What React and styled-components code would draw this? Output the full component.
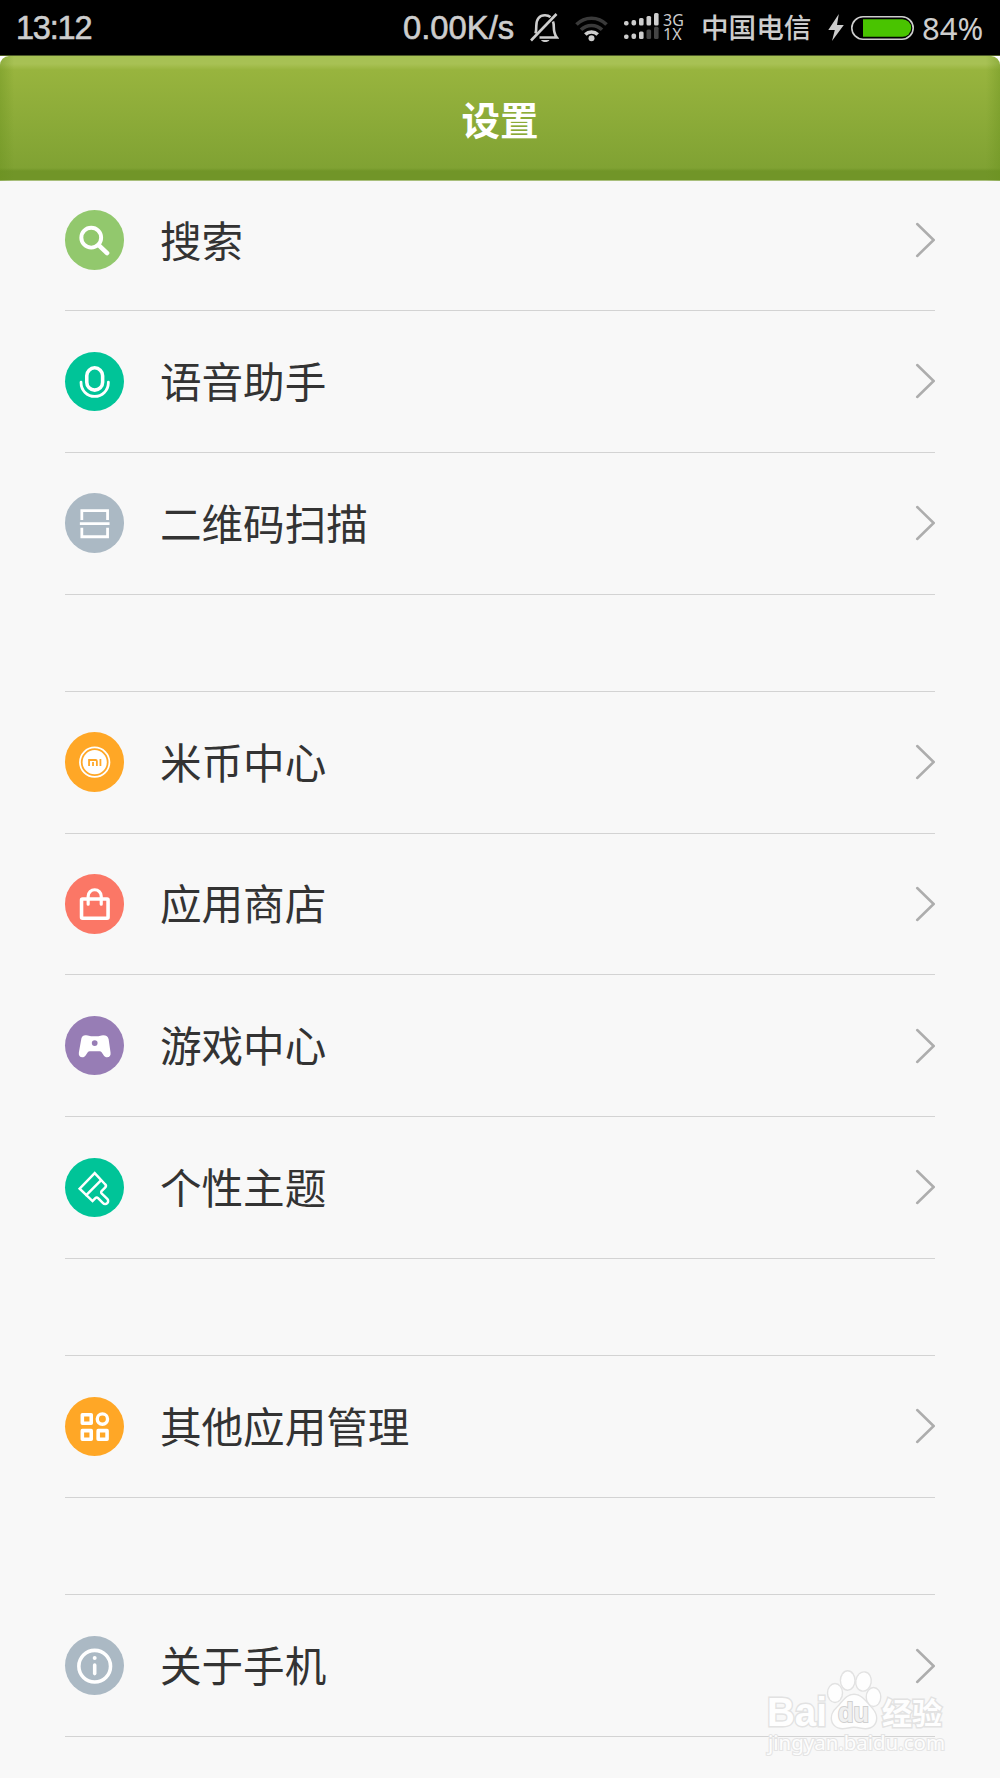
import React from "react";
import styled, { createGlobalStyle } from "styled-components";

const GlobalStyle = createGlobalStyle`
  body {
    margin: 0;
    background: #f8f8f8;
    font-family: "Noto Sans CJK SC", "Noto Sans", sans-serif;
  }
`;

const Screen = styled.div`
  position: relative;
  width: 1000px;
  height: 1778px;
  overflow: hidden;
  background: #f8f8f8;
`;

const StatusBar = styled.div`
  box-sizing: border-box;
  display: flex;
  align-items: center;
  height: 56px;
  padding: 0 18px 0 16px;
  background: #000;
  color: #cdcdcd;
  white-space: nowrap;
  border-bottom: 1px solid #4d5a27;
`;

const Clock = styled.span`
  flex: 1;
  font: 32.5px/56px "Liberation Sans", sans-serif;
  letter-spacing: -1.2px;
  -webkit-text-stroke: 0.6px #cdcdcd;
`;

const Speed = styled.span`
  width: 113px;
  margin-right: 14px;
  font: 32.8px/56px "Liberation Sans", sans-serif;
  -webkit-text-stroke: 0.6px #cdcdcd;
`;

const StatusIcon = styled.svg`
  display: block;
  flex: none;
  margin-right: ${(props) => props.$gap || 0}px;
`;

const NetworkType = styled.span`
  display: flex;
  flex-direction: column;
  width: 23px;
  margin-right: 15px;
  padding-bottom: 2px;
  font: 16px/14px "Noto Sans", sans-serif;
`;

const Carrier = styled.span`
  width: 110px;
  margin-right: 17px;
  padding-bottom: 3px;
  font-size: 27.6px;
  line-height: 50px;
  font-weight: 500;
`;

const Percent = styled.span`
  width: 60px;
  font: 31px/56px "Noto Sans", sans-serif;
`;

const HeaderBack = styled.div`
  background: #fff;
`;

const Header = styled.header`
  box-sizing: border-box;
  display: flex;
  align-items: center;
  justify-content: center;
  height: 125px;
  padding-bottom: 1px;
  border-radius: 9px 9px 0 0;
  background: linear-gradient(
      to right,
      rgba(105, 145, 30, 0.4),
      rgba(105, 145, 30, 0) 14px,
      rgba(105, 145, 30, 0) 986px,
      rgba(105, 145, 30, 0.4)
    ),
    linear-gradient(
      #a6c154 0,
      #a8c154 8px,
      #98b43e 14px,
      #80a233 112px,
      #719528 115px,
      #719528 124px,
      #a9bf7c 124px
    );
`;

const Title = styled.h1`
  margin: 0;
  color: #fff;
  font-size: 38.5px;
  line-height: 56px;
  font-weight: 700;
`;

const List = styled.main`
  padding: 0 65px;
`;

const Group = styled.section`
  margin-bottom: 96.3px;
  border-top: ${(props) => (props.$first ? "none" : "1px solid #d3d3d3")};
`;

const Row = styled.div`
  box-sizing: border-box;
  display: flex;
  align-items: center;
  height: 141.75px;
  border-bottom: 1px solid #d3d3d3;

  ${Group}:first-child &:first-child {
    height: 130px;
    padding-bottom: 11px;
  }
`;

const Badge = styled.span`
  flex: none;
  width: 59.4px;
  height: 59.4px;
  margin-right: 35.5px;
  border-radius: 50%;
  background: ${(props) => props.$color};

  svg {
    display: block;
    width: 100%;
    height: 100%;
  }
`;

const Label = styled.span`
  flex: 1;
  padding-bottom: 3px;
  color: #333;
  font-size: 41.6px;
  line-height: 60px;
  font-weight: 400;
`;

const Chevron = styled.svg`
  display: block;
  width: 20px;
  height: 36px;
`;

const Watermark = styled.svg`
  position: absolute;
  left: 760px;
  top: 1665px;
`;

// every glyph is drawn on a 60x60 grid
const icons = {
  search: (
    <>
      <circle cx="26.5" cy="28" r="10" strokeWidth="4" />
      <path d="M34 35.5 42.5 43.5" strokeWidth="4.6" />
    </>
  ),
  voice: (
    <>
      <rect x="22" y="16" width="16" height="22.5" rx="8" strokeWidth="3.6" />
      <path d="M16.2 30.5v.6a13.8 13.8 0 0 0 27.6 0v-.6" strokeWidth="2.8" />
    </>
  ),
  scan: (
    <g strokeWidth="2.8" strokeLinecap="butt" strokeLinejoin="miter">
      <path d="M17 27.3V17.8H43V27.3M17 35V44.2H43V35M15 31H45" />
    </g>
  ),
  coin: (
    <>
      <circle cx="30" cy="30.5" r="14.9" strokeWidth="1.8" />
      <circle cx="30" cy="30.5" r="12.2" fill="#fff" stroke="none" />
      <g stroke="#ffa726" strokeWidth="1.8" strokeLinecap="butt" strokeLinejoin="miter">
        <path d="M24.3 34.4V28.3H31a1.2 1.2 0 0 1 1.2 1.2v4.9M28.3 30.2v4.2M35.8 27.4v7" />
      </g>
    </>
  ),
  shop: (
    <>
      <rect x="16.7" y="25.2" width="26.8" height="19.5" rx="1" strokeWidth="3.6" />
      <path d="M23.4 30.5V22.5a6.6 6.6 0 0 1 13.2 0v8" strokeWidth="3.2" />
    </>
  ),
  game: (
    <>
      <path
        d="M21.5 19.5c2.5 0 3 1 4.8 1h7.4c1.8 0 2.300-1 4.800-1 3.500 0 5 1.200 5.600 4L46 36.800c.5 2.900-1 4.900-3.500 4.900-1.500 0-2.500-.6-3.300-1.800l-2.200-3.200c-.5-.8-1.100-1.200-2-1.200H25c-.9 0-1.500.4-2 1.200l-2.200 3.200c-.8 1.200-1.800 1.800-3.300 1.800-2.500 0-4-2-3.500-4.900L16.400 23.500c.6-2.800 1.600-4 5.100-4z"
        fill="#fff"
        stroke="none"
      />
      <circle cx="30" cy="27.3" r="2.9" fill="#977db5" stroke="none" />
    </>
  ),
  theme: (
    <g strokeWidth="2.5" strokeLinejoin="miter">
      <path d="M30 15.3 14.8 31 27.8 43.5 30.7 40.5c.9-.9 1.8-.9 2.7 0l5 5a2.8 2.8 0 0 0 4.3-4.3l-5.5-5.2c-.9-.9-.9-1.8 0-2.7l3.3-3.3c1.3-1.3 1.3-2.2 0-3.5z" />
      <path d="M36.3 22.5 21.5 37.5" />
    </g>
  ),
  apps: (
    <g strokeWidth="3.6">
      <rect x="17.5" y="18" width="9" height="8.6" />
      <circle cx="37.8" cy="22.3" r="5.2" strokeWidth="3.4" />
      <rect x="17.5" y="34" width="9" height="8.6" />
      <rect x="33.5" y="34" width="9" height="8.6" />
    </g>
  ),
  about: (
    <>
      <circle cx="30" cy="30.5" r="16" strokeWidth="3.6" />
      <circle cx="30" cy="22.3" r="2" fill="#fff" stroke="none" />
      <path d="M30 29.3v8.7" strokeWidth="3.6" />
    </>
  ),
};

const groups = [
  [
    { icon: "search", color: "#92c86d", label: "搜索" },
    { icon: "voice", color: "#00c498", label: "语音助手" },
    { icon: "scan", color: "#abb9c4", label: "二维码扫描" },
  ],
  [
    { icon: "coin", color: "#ffa726", label: "米币中心" },
    { icon: "shop", color: "#fb7766", label: "应用商店" },
    { icon: "game", color: "#977db5", label: "游戏中心" },
    { icon: "theme", color: "#00c498", label: "个性主题" },
  ],
  [{ icon: "apps", color: "#ffa726", label: "其他应用管理" }],
  [{ icon: "about", color: "#abb9c4", label: "关于手机" }],
];

const SettingsRow = ({ icon, color, label }) => (
  <Row>
    <Badge $color={color}>
      <svg
        viewBox="0 0 60 60"
        fill="none"
        stroke="#fff"
        strokeLinecap="round"
        strokeLinejoin="round"
      >
        {icons[icon]}
      </svg>
    </Badge>
    <Label>{label}</Label>
    <Chevron viewBox="0 0 20 36" fill="none" stroke="#adadad" strokeWidth="2.5">
      <path d="M2.2 2 18.6 18 2.2 34" strokeLinecap="round" />
    </Chevron>
  </Row>
);

const Status = () => (
  <StatusBar>
    <Clock>13:12</Clock>
    <Speed>0.00K/s</Speed>
    <StatusIcon $gap={16} width="29" height="30" viewBox="0 0 29 30" fill="none" stroke="#cdcdcd" strokeWidth="2.6">
      <path d="M5.5 20.5c.7-2 .8-4.5.8-7.5C6.3 6 9.5 2.2 15 2.2c2.3 0 4.2.7 5.5 1.9M23 8.5c.6 1.5.8 3.3.8 5.5 0 5 .7 7.5 3 10.5H9.5" />
      <path d="M26.5 1 1 27.5" />
      <path d="M11 27h8.5c-1.6 2.7-6.9 2.7-8.5 0z" fill="#cdcdcd" stroke="none" />
    </StatusIcon>
    <StatusIcon $gap={16} width="33" height="28" viewBox="0 0 33 28" fill="none" strokeWidth="3.6">
      <path d="M1.5 10.5a21 21 0 0 1 30 0" stroke="#3a3a3a" />
      <path d="M6 15.8a14.8 14.8 0 0 1 21 0" stroke="#3a3a3a" />
      <path d="M10.3 20.5a8.8 8.8 0 0 1 12.4 0" stroke="#cdcdcd" />
      <circle cx="16.5" cy="24.2" r="3" fill="#cdcdcd" />
    </StatusIcon>
    <StatusIcon $gap={4} width="35" height="30" viewBox="0 0 35 30" fill="#cdcdcd">
      <rect x="0" y="8" width="4.6" height="4.5" rx="2" />
      <rect x="7.5" y="7" width="4.6" height="5.5" rx="2" />
      <rect x="15" y="5" width="4.6" height="7.5" rx="1.5" />
      <rect x="22.5" y="3" width="4.6" height="9.5" rx="1.5" />
      <rect x="30" y="0" width="4.6" height="12.5" rx="1.5" />
      <rect x="0" y="21.5" width="4.6" height="4.5" rx="2" />
      <rect x="7.5" y="20.5" width="4.6" height="5.5" rx="2" />
      <rect x="15" y="18.5" width="4.6" height="7.5" rx="1.5" />
      <rect x="22.5" y="16.5" width="4.6" height="9.5" rx="1.5" fill="#444" />
      <rect x="30" y="13.8" width="4.6" height="12.2" rx="1.5" fill="#444" />
    </StatusIcon>
    <NetworkType>
      <span>3G</span>
      <span>1X</span>
    </NetworkType>
    <Carrier>中国电信</Carrier>
    <StatusIcon $gap={7} width="16" height="27" viewBox="0 0 16 27" fill="#cdcdcd">
      <path d="M10.8 0 .3 16h6.5L4 27 15.8 11H9z" />
    </StatusIcon>
    <StatusIcon $gap={8} width="63" height="24" viewBox="0 0 63 24">
      <rect x=".8" y=".8" width="61.4" height="22.4" rx="11.2" fill="none" stroke="#cdcdcd" strokeWidth="1.6" />
      <path d="M12 3.3h39.5a8.7 8.7 0 0 1 0 17.4H12z" fill="#49c400" />
    </StatusIcon>
    <Percent>84%</Percent>
  </StatusBar>
);

const BaiduMark = () => (
  <Watermark width="190" height="95" viewBox="0 0 190 95">
    <g fill="#fefefe" stroke="#e2e2e2" strokeWidth="2.8" paintOrder="stroke">
      <ellipse cx="75" cy="28" rx="6.8" ry="8.8" />
      <ellipse cx="87.7" cy="15.5" rx="6.6" ry="9" />
      <ellipse cx="103.5" cy="16.5" rx="7" ry="9" transform="rotate(10 103.5 16.5)" />
      <ellipse cx="113.5" cy="32" rx="6.6" ry="8.8" />
      <path d="M94 30c7 0 10.5 5.5 15 10.5 4.5 4.5 7 8 7 12.5 0 6.5-4.5 10-10.5 10-4 0-7-1.5-11.5-1.5S86.5 63 82.5 63C76.500 63 72 59 72 53c0-5 3-8 7.5-12.5C84 35.500 87 30 94 30z" />
      <g fontFamily="'Liberation Sans', sans-serif" fontWeight="700">
        <text x="7" y="61" fontSize="40" textLength="60" lengthAdjust="spacingAndGlyphs">Bai</text>
        <text x="78" y="57" fontSize="27" fill="#f0f0f0" stroke="#d0d0d0" strokeWidth="2" textLength="31" lengthAdjust="spacingAndGlyphs">du</text>
      </g>
      <text x="122" y="59" fontSize="30" fontWeight="700" fontFamily="'Noto Sans CJK SC', sans-serif">经验</text>
    </g>
    <text
      x="8"
      y="85"
      fontSize="20"
      fontFamily="'Noto Sans', sans-serif"
      fill="#fdfdfd"
      stroke="#e4e4e4"
      strokeWidth="2.2"
      paintOrder="stroke"
      textLength="177"
      lengthAdjust="spacingAndGlyphs"
    >
      jingyan.baidu.com
    </text>
  </Watermark>
);

const App = () => {
  return (
    <Screen>
      <GlobalStyle />
      <Status />
      <HeaderBack>
        <Header>
          <Title>设置</Title>
        </Header>
      </HeaderBack>
      <List>
        {groups.map((rows, i) => (
          <Group key={i} $first={i === 0}>
            {rows.map((row) => (
              <SettingsRow key={row.label} {...row} />
            ))}
          </Group>
        ))}
      </List>
      <BaiduMark />
    </Screen>
  );
};

export default App;
